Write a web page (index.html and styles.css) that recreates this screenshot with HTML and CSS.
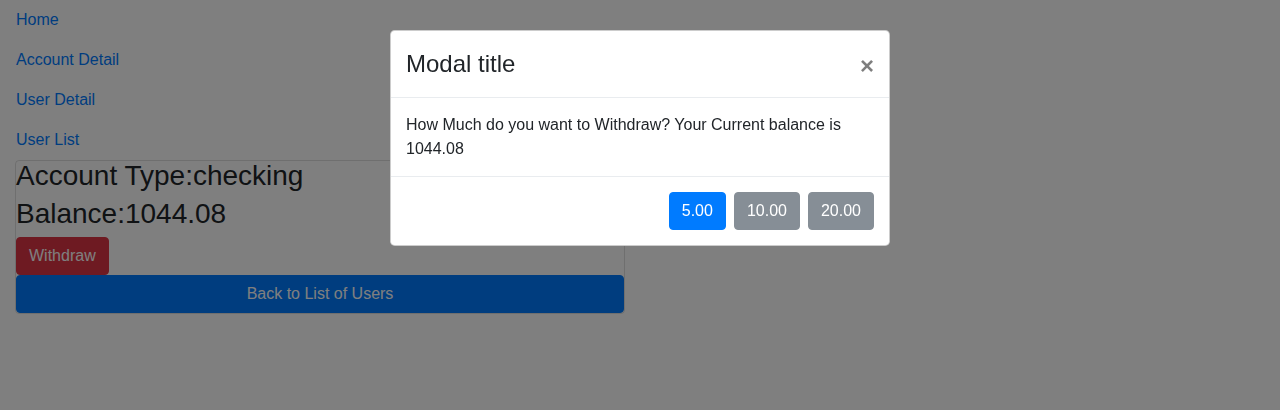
FILE: index.html
```html
<!DOCTYPE html>
<html lang="en">
<head>
<meta charset="utf-8">
<title>Account Detail</title>
<link rel="stylesheet" href="styles.css">
</head>
<body>
<div class="page">
  <nav class="nav">
    <a class="nav-link" href="#">Home</a>
    <a class="nav-link" href="#">Account Detail</a>
    <a class="nav-link" href="#">User Detail</a>
    <a class="nav-link" href="#">User List</a>
  </nav>
  <div class="col">
    <div class="card">
      <div class="big">Account Type:checking</div>
      <div class="big">Balance:1044.08</div>
      <button class="btn btn-danger">Withdraw</button>
      <button class="btn btn-primary btn-block">Back to List of Users</button>
    </div>
  </div>
</div>

<div class="backdrop"></div>
<div class="modal">
  <div class="modal-dialog">
    <div class="modal-content">
      <div class="modal-header">
        <h4 class="modal-title">Modal title</h4>
        <button class="close" aria-label="Close">&times;</button>
      </div>
      <div class="modal-body">
        How Much do you want to Withdraw? Your Current balance is 1044.08
      </div>
      <div class="modal-footer">
        <button class="btn btn-primary">5.00</button>
        <button class="btn btn-secondary">10.00</button>
        <button class="btn btn-secondary">20.00</button>
      </div>
    </div>
  </div>
</div>
</body>
</html>
```

FILE: styles.css
```css
* { box-sizing: border-box; }

html, body {
  margin: 0;
  padding: 0;
  height: 100%;
}

body {
  font-family: "Liberation Sans", Arial, sans-serif;
  font-size: 16px;
  line-height: 1.5;
  color: #212529;
  background: #fff;
  overflow: hidden;
}

.page {
  padding: 8px 15px 0;
}

.nav {
  display: flex;
  flex-direction: column;
  gap: 16px;
  margin-bottom: 8px;
  padding-left: 1px;
}

.nav-link {
  color: #007bff;
  text-decoration: none;
  line-height: 24px;
  align-self: flex-start;
}

.col {
  width: 610px;
}

.card {
  border: 1px solid rgba(0, 0, 0, 0.125);
  border-radius: 4px;
  display: flex;
  flex-direction: column;
  align-items: flex-start;
}

.big {
  font-size: 28px;
  line-height: 30px;
  margin-bottom: 8px;
  color: #212529;
}

.btn {
  font-family: "Liberation Sans", Arial, sans-serif;
  font-size: 16px;
  line-height: 24px;
  font-weight: 400;
  padding: 6px 12px;
  border: 1px solid transparent;
  border-radius: 4px;
  color: #fff;
  cursor: pointer;
}

.btn-danger {
  background: #dc3545;
  border-color: #dc3545;
}

.btn-primary {
  background: #007bff;
  border-color: #007bff;
}

.btn-secondary {
  background: #868e96;
  border-color: #868e96;
}

.btn-block {
  align-self: stretch;
  width: 100%;
}

.backdrop {
  position: fixed;
  inset: 0;
  background: #000;
  opacity: 0.5;
}

.modal {
  position: fixed;
  inset: 0;
}

.modal-dialog {
  width: 500px;
  margin: 30px auto;
}

.modal-content {
  background: #fff;
  border: 1px solid rgba(0, 0, 0, 0.2);
  border-radius: 4.8px;
}

.modal-header {
  display: flex;
  align-items: flex-start;
  justify-content: space-between;
  padding: 15px;
  border-bottom: 1px solid #e9ecef;
}

.modal-title {
  margin: 0;
  font-size: 24px;
  font-weight: 500;
  line-height: 36px;
}

.close {
  margin: -15px -15px -15px auto;
  padding: 23px 15px 7px;
  background: transparent;
  border: 0;
  font-family: "Liberation Sans", Arial, sans-serif;
  font-size: 24px;
  font-weight: 700;
  line-height: 24px;
  color: #000;
  opacity: 0.5;
  text-shadow: 0 1px 0 #fff;
  cursor: pointer;
}

.modal-body {
  padding: 15px;
  line-height: 24px;
}

.modal-footer {
  display: flex;
  justify-content: flex-end;
  align-items: center;
  gap: 8px;
  padding: 15px;
  border-top: 1px solid #e9ecef;
}
```
